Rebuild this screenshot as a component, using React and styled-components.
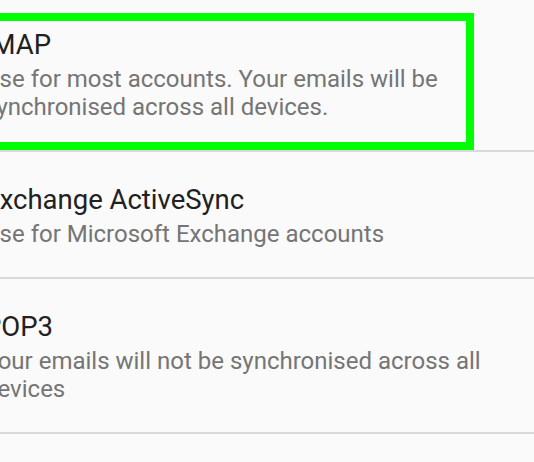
import React from "react";
import styled, { createGlobalStyle } from "styled-components";

const GlobalStyle = createGlobalStyle`
  html, body {
    margin: 0;
    padding: 0;
    background: #fafafa;
    overflow: hidden;
  }
  body {
    font-family: Roboto, "Noto Sans", "Liberation Sans", sans-serif;
  }
`;

const Screen = styled.div`
  width: 534px;
  height: 462px;
  overflow: hidden;
  background: #fafafa;
`;

const List = styled.ul`
  list-style: none;
  margin: -3px 0 0 -16px;
  padding: 0;
  width: calc(100% + 16px);
`;

const Item = styled.li`
  position: relative;
  display: flex;
  flex-direction: column;
  gap: 4px;
  padding: 32px 20px 29px 0;
  border-bottom: 2px solid #d9d9d9;
`;

const Title = styled.div`
  font-size: 27.5px;
  line-height: 32px;
  color: #212121;
`;

const Subtitle = styled.div`
  font-size: 24px;
  line-height: 28px;
  color: #757575;
`;

const Highlight = styled.div`
  position: absolute;
  top: 16px;
  bottom: 0;
  left: -40px;
  right: 60px;
  border: 8px solid #00ff00;
  pointer-events: none;
`;

const options = [
  {
    title: "IMAP",
    text: "Use for most accounts. Your emails will be synchronised across all devices.",
    highlighted: true,
  },
  {
    title: "Exchange ActiveSync",
    text: "Use for Microsoft Exchange accounts",
  },
  {
    title: "POP3",
    text: "Your emails will not be synchronised across all devices",
  },
  {
    title: "",
    text: "",
  },
];

export default function App() {
  return (
    <Screen>
      <GlobalStyle />
      <List>
        {options.map((o, i) => (
          <Item key={i}>
            <Title>{o.title}</Title>
            <Subtitle>{o.text}</Subtitle>
            {o.highlighted && <Highlight />}
          </Item>
        ))}
      </List>
    </Screen>
  );
}
